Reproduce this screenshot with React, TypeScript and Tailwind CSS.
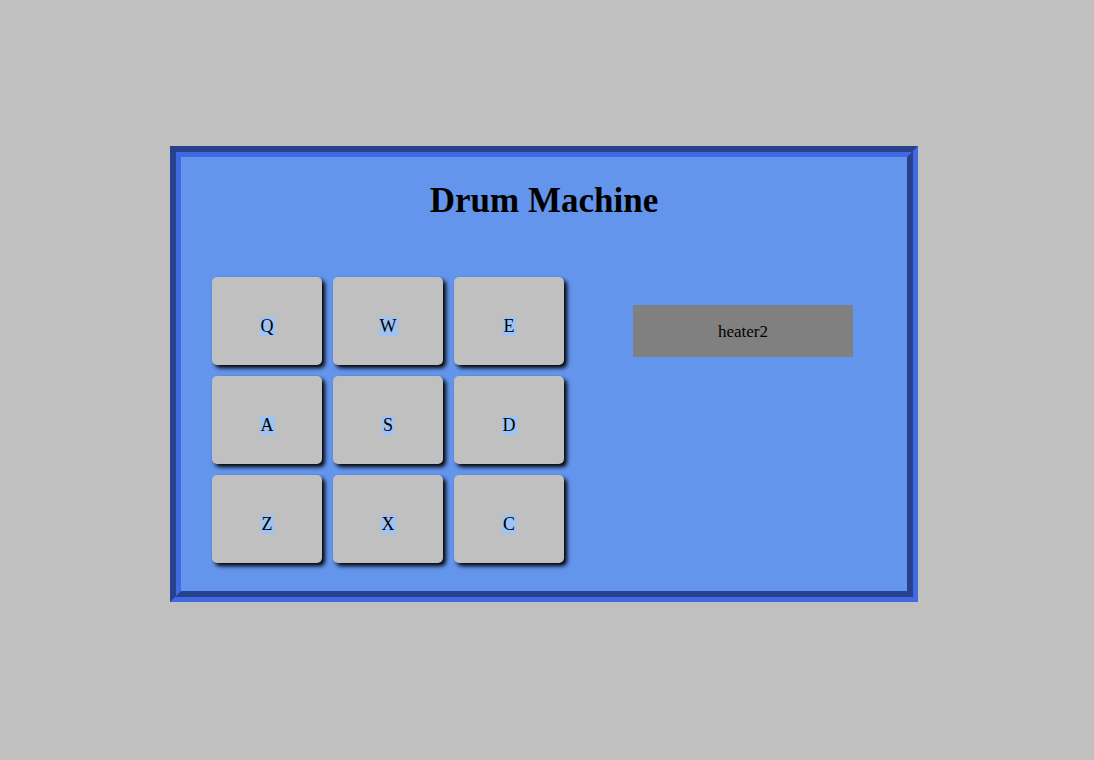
import React from "react";

const keys = ["Q", "W", "E", "A", "S", "D", "Z", "X", "C"];

const DrumPad = ({ label }: { label: string }) => {
  return (
    <div className="flex h-[88px] w-[110px] items-center justify-center rounded-[5px] bg-[#c0c0c0] pt-[10px] shadow-[3px_3px_4px_#000]">
      <span className="bg-[#9fc3f2] px-[1px] text-[18px] leading-[19px] text-black">{label}</span>
    </div>
  );
};

export default function App() {
  return (
    <div className="min-h-screen bg-[#c0c0c0] pl-[170px] pt-[146px] font-['Liberation_Serif',serif]">
      <div className="h-[456px] w-[748px] border-[11px] border-[#4169e1] bg-[#6495ed] [border-style:groove]">
        <h1 className="mt-[24px] text-center text-[35px] font-bold leading-[40px] text-black">Drum Machine</h1>

        <div className="mt-[56px] flex items-start justify-between pl-[31px] pr-[54px]">
          <div className="grid grid-cols-[repeat(3,110px)] gap-[11px]">
            {keys.map((k) => (
              <DrumPad key={k} label={k} />
            ))}
          </div>

          <div className="mt-[28px] flex h-[52px] w-[220px] items-center justify-center bg-[#808080] pt-[1px] text-[17px] text-black">
            heater2
          </div>
        </div>
      </div>
    </div>
  );
}
